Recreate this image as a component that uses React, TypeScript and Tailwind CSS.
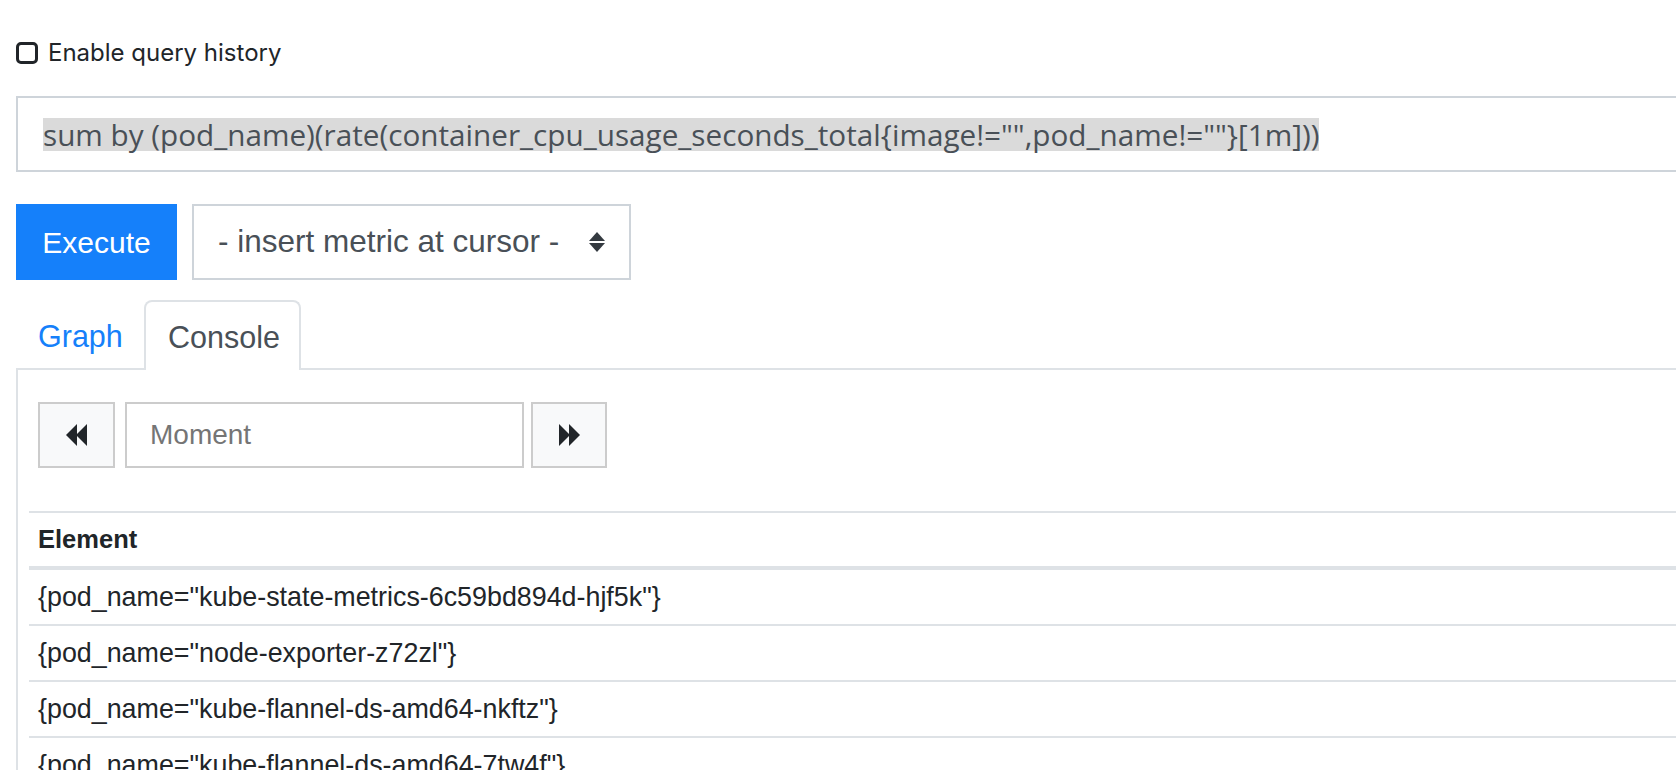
import React from "react";

const rows = [
  '{pod_name="kube-state-metrics-6c59bd894d-hjf5k"}',
  '{pod_name="node-exporter-z72zl"}',
  '{pod_name="kube-flannel-ds-amd64-nkftz"}',
  '{pod_name="kube-flannel-ds-amd64-7tw4f"}',
];

function Rewind() {
  return (
    <svg width="22" height="22" viewBox="0 0 22 22" className="fill-[#212529]">
      <polygon points="0,11 11,0 11,22" />
      <polygon points="10,11 21,0 21,22" />
    </svg>
  );
}

function Forward() {
  return (
    <svg width="22" height="22" viewBox="0 0 22 22" className="fill-[#212529]">
      <polygon points="1,0 12,11 1,22" />
      <polygon points="11,0 22,11 11,22" />
    </svg>
  );
}

export default function App() {
  return (
    <div className="w-[1676px] h-[770px] overflow-hidden bg-white font-['Liberation_Sans',Arial,sans-serif]">
      <div className="w-[1760px] pl-4">
        {/* checkbox row */}
        <div className="mt-[41px] h-[24px] flex items-center gap-[10px]">
          <div className="w-[22px] h-[22px] rounded-[5px] border-[3px] border-[#212529] bg-white" />
          <span className="font-['Inter',sans-serif] text-[24px] text-[#212529] leading-none">
            Enable query history
          </span>
        </div>

        {/* query box */}
        <div className="mt-[31px] h-[76px] border-2 border-[#ced4da] flex items-center pl-[25px]">
          <span className="bg-[#dadada] text-[#495057] font-['Open_Sans',sans-serif] text-[29.7px] leading-[33px]">
            {'sum by (pod_name)(rate(container_cpu_usage_seconds_total{image!="",pod_name!=""}[1m]))'}
          </span>
        </div>

        {/* execute row */}
        <div className="mt-[32px] flex gap-[15px] h-[76px]">
          <div className="w-[161px] bg-[#1580fa] text-white text-[30px] flex items-center justify-center pt-[1px]">
            Execute
          </div>
          <div className="w-[439px] border-2 border-[#ced4da] flex items-center pl-[24px] pr-[24px] justify-between text-[#495057] text-[31.5px]">
            <span>- insert metric at cursor -</span>
            <svg width="16" height="20" viewBox="0 0 16 20" className="fill-[#343a40]">
              <polygon points="8,0 16,9 0,9" />
              <polygon points="0,11 16,11 8,20" />
            </svg>
          </div>
        </div>

        {/* tabs */}
        <div className="mt-[22px] flex items-end h-[68px] border-b-2 border-[#dee2e6]">
          <div className="w-[128px] h-[68px] flex items-center pl-[22px] pt-[5px] text-[#1580fa] text-[30.5px]">
            Graph
          </div>
          <div className="w-[157px] h-[70px] -mb-[2px] border-2 border-b-0 border-[#dee2e6] rounded-t-[8px] bg-white flex items-center pl-[22px] pt-[3px] text-[#495057] text-[30.5px]">
            Console
          </div>
        </div>

        {/* panel */}
        <div className="border-l-2 border-[#dee2e6] pl-[11px] pt-[32px] h-[420px]">
          <div className="flex ml-[9px] h-[66px]">
            <div className="w-[77px] border-2 border-[#cccccc] bg-[#f8f9fa] flex items-center justify-center">
              <Rewind />
            </div>
            <div className="ml-[10px] w-[399px] border-2 border-[#cccccc] bg-white flex items-center pl-[23px] text-[28px] text-[#757575]">
              Moment
            </div>
            <div className="ml-[7px] w-[76px] border-2 border-[#cccccc] bg-[#f8f9fa] flex items-center justify-center">
              <Forward />
            </div>
          </div>

          <div className="mt-[43px] text-[26.85px] text-[#212529]">
            <div className="h-[59px] border-t-2 border-b-[4px] border-[#dee2e6] flex items-center pl-[9px] font-bold text-[25.5px]">
              Element
            </div>
            {rows.map((r) => (
              <div key={r} className="h-[56px] border-b-2 border-[#dee2e6] flex items-center pl-[9px]">
                {r}
              </div>
            ))}
          </div>
        </div>
      </div>
    </div>
  );
}
